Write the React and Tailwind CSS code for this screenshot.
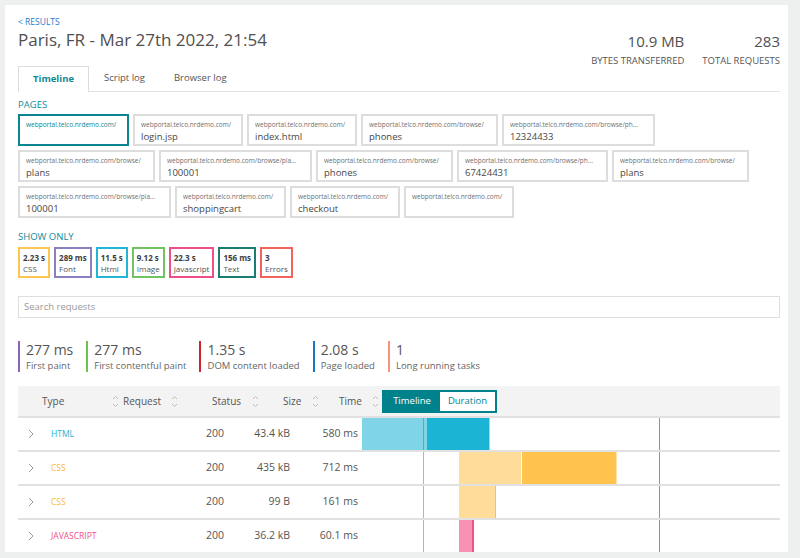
import React from "react";

const pageRows = [
  [
    { url: "webportal.telco.nrdemo.com/", name: "", w: "w-[111px]", active: true },
    { url: "webportal.telco.nrdemo.com/", name: "login.jsp", w: "w-[110px]" },
    { url: "webportal.telco.nrdemo.com/", name: "index.html", w: "w-[110px]" },
    { url: "webportal.telco.nrdemo.com/browse/", name: "phones", w: "w-[137px]" },
    { url: "webportal.telco.nrdemo.com/browse/ph...", name: "12324433", w: "w-[153px]" },
  ],
  [
    { url: "webportal.telco.nrdemo.com/browse/", name: "plans", w: "w-[137px]" },
    { url: "webportal.telco.nrdemo.com/browse/pla...", name: "100001", w: "w-[153px]" },
    { url: "webportal.telco.nrdemo.com/browse/", name: "phones", w: "w-[137px]" },
    { url: "webportal.telco.nrdemo.com/browse/ph...", name: "67424431", w: "w-[151px]" },
    { url: "webportal.telco.nrdemo.com/browse/", name: "plans", w: "w-[137px]" },
  ],
  [
    { url: "webportal.telco.nrdemo.com/browse/pla...", name: "100001", w: "w-[153px]" },
    { url: "webportal.telco.nrdemo.com/", name: "shoppingcart", w: "w-[111px]" },
    { url: "webportal.telco.nrdemo.com/", name: "checkout", w: "w-[110px]" },
    { url: "webportal.telco.nrdemo.com/", name: "", w: "w-[110px]" },
  ],
];

const filters = [
  { value: "2.23 s", label: "CSS", border: "border-[#fcc650]" },
  { value: "289 ms", label: "Font", border: "border-[#8b7fbf]" },
  { value: "11.5 s", label: "Html", border: "border-[#22b5d6]" },
  { value: "9.12 s", label: "Image", border: "border-[#70c262]" },
  { value: "22.3 s", label: "Javascript", border: "border-[#ee4f88]" },
  { value: "156 ms", label: "Text", border: "border-[#1b7d72]" },
  { value: "3", label: "Errors", border: "border-[#f0645b]" },
];

const metrics = [
  { value: "277 ms", label: "First paint", border: "border-[#8a64b5]" },
  { value: "277 ms", label: "First contentful paint", border: "border-[#6cc24a]" },
  { value: "1.35 s", label: "DOM content loaded", border: "border-[#c7262c]" },
  { value: "2.08 s", label: "Page loaded", border: "border-[#1877c6]" },
  { value: "1", label: "Long running tasks", border: "border-[#f7937b]" },
];

const rows = [
  {
    type: "HTML",
    color: "text-[#1fb3d3]",
    size: "43.4 kB",
    time: "580 ms",
    line: "bg-[#4bb59f]",
    bars: [
      { left: 0, width: 65, cls: "bg-[#80d4e7]" },
      { left: 65, width: 62, cls: "bg-[#1cb4d4]" },
      { left: 127, width: 1, cls: "bg-[#8fdcee]" },
    ],
  },
  {
    type: "CSS",
    color: "text-[#fbb93d]",
    size: "435 kB",
    time: "712 ms",
    line: "bg-[#8fd084]",
    bars: [
      { left: 97, width: 62, cls: "bg-[#fedd9b]" },
      { left: 160, width: 94, cls: "bg-[#ffc34e]" },
      { left: 254, width: 1, cls: "bg-[#fee2a8]" },
    ],
  },
  {
    type: "CSS",
    color: "text-[#fbb93d]",
    size: "99 B",
    time: "161 ms",
    line: "bg-[#8fd084]",
    bars: [
      { left: 97, width: 36, cls: "bg-[#fedd9b]" },
      { left: 133, width: 1, cls: "bg-[#fbc14f]" },
    ],
  },
  {
    type: "JAVASCRIPT",
    color: "text-[#ef4f87]",
    size: "36.2 kB",
    time: "60.1 ms",
    line: "bg-[#8fd084]",
    bars: [
      { left: 97, width: 13, cls: "bg-[#f792b5]" },
      { left: 110, width: 2, cls: "bg-[#f0528a]" },
    ],
  },
];

function SortIcon() {
  return (
    <svg width="7" height="13" viewBox="0 0 7 13" className="shrink-0">
      <path d="M1 4 L3.5 1.5 L6 4" fill="none" stroke="#bdbdbd" strokeWidth="1" />
      <path d="M1 9 L3.5 11.5 L6 9" fill="none" stroke="#bdbdbd" strokeWidth="1" />
    </svg>
  );
}

function Chevron() {
  return (
    <svg width="6" height="10" viewBox="0 0 6 10">
      <path d="M1 1 L5 5 L1 9" fill="none" stroke="#9a9a9a" strokeWidth="1" />
    </svg>
  );
}

function PageChip({ page }) {
  return (
    <div
      className={`${page.w} h-[32px] shrink-0 border-2 px-[6px] pt-[4px] ${
        page.active ? "border-[#0c8590]" : "border-[#dddddd]"
      }`}
    >
      <div
        className={`text-[6.5px] leading-[10px] truncate ${
          page.active ? "text-[#0c8590]" : "text-[#6f6f6f]"
        }`}
      >
        {page.url}
      </div>
      <div className="text-[9.5px] leading-[13px] text-[#474747]">{page.name}</div>
    </div>
  );
}

export default function App() {
  return (
    <div className="min-h-[558px] bg-[#eef0ef] pt-[5px] pl-[5px] pr-[12px] font-['Open_Sans',sans-serif]">
      <div className="h-[547px] overflow-hidden bg-white pl-[13px] pr-[8px] pt-[11px]">
        {/* header */}
        <div className="flex h-[50px] items-start justify-between">
          <div>
            <div className="text-[8.5px] leading-[12px] text-[#1b7bd0]">&lt; RESULTS</div>
            <div className="text-[17px] leading-[24px] text-[#4f4f4f]">
              Paris, FR - Mar 27th 2022, 21:54
            </div>
          </div>
          <div className="flex gap-[18px] pt-[16px]">
            <div className="text-right">
              <div className="text-[15px] leading-[19px] text-[#4f4f4f]">10.9 MB</div>
              <div className="mt-[4px] text-[9.5px] leading-[12px] text-[#555]">BYTES TRANSFERRED</div>
            </div>
            <div className="text-right">
              <div className="text-[15px] leading-[19px] text-[#4f4f4f]">283</div>
              <div className="mt-[4px] text-[9.5px] leading-[12px] text-[#555]">TOTAL REQUESTS</div>
            </div>
          </div>
        </div>

        {/* tabs */}
        <div className="flex h-[26px] border-b border-[#e2e2e2]">
          <div className="-mb-px flex h-[26px] items-center border border-b-0 border-[#dcdcdc] bg-white px-[14px] text-[9.5px] font-bold text-[#108a94]">
            Timeline
          </div>
          <div className="flex items-center px-[15px] text-[9.5px] text-[#555]">Script log</div>
          <div className="flex items-center px-[14px] text-[9.5px] text-[#555]">Browser log</div>
        </div>

        {/* pages */}
        <div className="mt-[7px] text-[9.5px] leading-[12px] text-[#0f8d98]">PAGES</div>
        <div className="mt-[3px] flex flex-col gap-[4px]">
          {pageRows.map((row, i) => (
            <div key={i} className="flex gap-[4px]">
              {row.map((p, j) => (
                <PageChip key={j} page={p} />
              ))}
            </div>
          ))}
        </div>

        {/* show only */}
        <div className="mt-[13px] text-[9.5px] leading-[12px] text-[#0f8d98]">SHOW ONLY</div>
        <div className="mt-[4px] flex gap-[4px]">
          {filters.map((f) => (
            <div
              key={f.label}
              className={`flex h-[31px] flex-col justify-center border-2 px-[3px] ${f.border}`}
            >
              <div className="text-[8px] font-bold leading-[11px] text-[#3c3c3c]">{f.value}</div>
              <div className="text-[8px] leading-[11px] text-[#555]">{f.label}</div>
            </div>
          ))}
        </div>

        {/* search */}
        <div className="mt-[18px] flex h-[22px] items-center border border-[#dedede] px-[5px] text-[9.5px] text-[#9a9a9a]">
          Search requests
        </div>

        {/* metrics */}
        <div className="mt-[23px] flex gap-[13px]">
          {metrics.map((m) => (
            <div key={m.label} className={`h-[31px] border-l-2 pl-[6px] ${m.border}`}>
              <div className="text-[14px] leading-[18px] text-[#555]">{m.value}</div>
              <div className="text-[9.5px] leading-[13px] text-[#666]">{m.label}</div>
            </div>
          ))}
        </div>

        {/* table */}
        <div className="mt-[14px]">
          <div className="flex h-[30px] items-center bg-[#f3f3f3] text-[10px] text-[#555]">
            <div className="w-[24px] shrink-0" />
            <div className="w-[70px] shrink-0">Type</div>
            <SortIcon />
            <div className="w-[4px] shrink-0" />
            <div className="w-[48px] shrink-0">Request</div>
            <SortIcon />
            <div className="w-[34px] shrink-0" />
            <div className="w-[40px] shrink-0">Status</div>
            <SortIcon />
            <div className="w-[24px] shrink-0" />
            <div className="w-[29px] shrink-0">Size</div>
            <SortIcon />
            <div className="w-[20px] shrink-0" />
            <div className="w-[33px] shrink-0">Time</div>
            <SortIcon />
            <div className="w-[3px] shrink-0" />
            <div className="flex h-[23px] shrink-0 border-2 border-[#00828d] text-[9.5px]">
              <div className="flex w-[56px] items-center justify-center bg-[#00828d] text-white">Timeline</div>
              <div className="flex w-[55px] items-center justify-center bg-white text-[#00828d]">Duration</div>
            </div>
          </div>

          {rows.map((r, i) => (
            <div key={i} className="flex h-[34px] border-t-2 border-[#e1e1e1] text-[10.5px] text-[#555]">
              <div className="flex w-[33px] shrink-0 items-center pl-[10px]">
                <Chevron />
              </div>
              <div className={`flex w-[140px] shrink-0 items-center text-[8.5px] ${r.color}`}>{r.type}</div>
              <div className="flex w-[40px] shrink-0 items-center pl-[15px]">200</div>
              <div className="flex w-[59px] shrink-0 items-center justify-end">{r.size}</div>
              <div className="flex w-[72px] shrink-0 items-center justify-end pr-[4px]">{r.time}</div>
              <div className="relative flex-1">
                {r.bars.map((b, k) => (
                  <div
                    key={k}
                    className={`absolute top-0 bottom-0 ${b.cls}`}
                    style={{ left: b.left, width: b.width }}
                  />
                ))}
                <div className={`absolute top-0 bottom-0 left-[61px] w-px ${r.line}`} />
                <div className="absolute top-0 bottom-0 left-[297px] w-px bg-[#d7747b]" />
              </div>
            </div>
          ))}
        </div>
      </div>
    </div>
  );
}
